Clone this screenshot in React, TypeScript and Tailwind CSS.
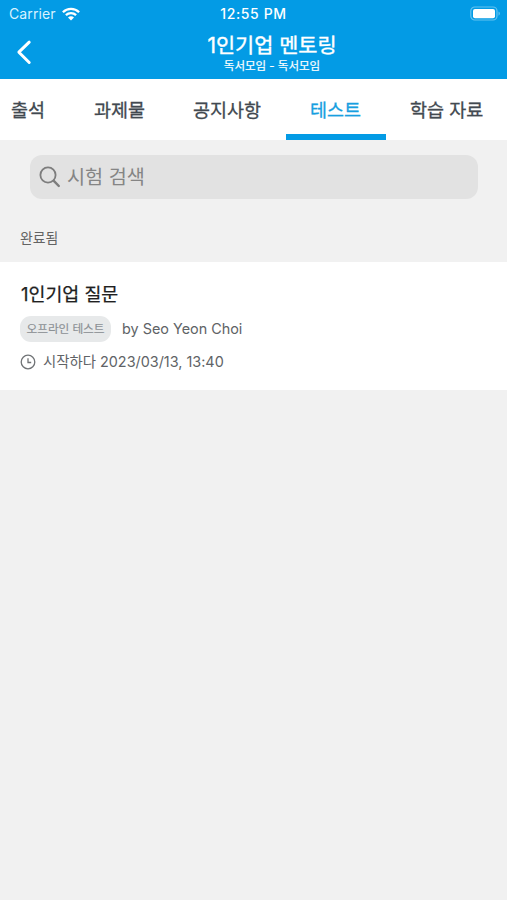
import type { ReactNode } from "react";

const tabs = [
  { label: "출석", box: "w-[70px] pl-[11px]" },
  { label: "과제물", box: "w-[99px] pl-[24px]" },
  { label: "공지사항", box: "w-[117px] pl-[24px]" },
  { label: "테스트", box: "w-[100px] pl-[24px]", active: true },
  { label: "학습 자료", box: "w-[121px] pl-[24px]" },
];

function Pill({ children }: { children: ReactNode }) {
  return (
    <span className="flex h-[26px] w-[91px] shrink-0 items-center justify-center rounded-[11px] bg-[#e7e9ea] pt-[2px] text-[11.7px] tracking-[-0.1px] text-[#8b9094] [-webkit-text-stroke:0.15px_#8b9094]">
      {children}
    </span>
  );
}

function StatusBar() {
  return (
    <div className="grid h-[28px] grid-cols-3 items-center pl-[9px] pr-[6px] text-[14px] leading-none">
      <div className="flex items-center gap-[6px]">
        <span className="tracking-[0.1px] text-[#d8f2ff]">Carrier</span>
        <svg width="18" height="14" viewBox="0 0 18 14" fill="none" stroke="white" strokeWidth="2.3">
          <path d="M0.9 5.2C5.4 0.7 12.6 0.7 17.1 5.2" />
          <path d="M3.9 8.2C6.8 5.4 11.2 5.4 14.1 8.2" />
          <path d="M6 10.4C7.6 8.9 10.4 8.9 12 10.4L9 13.6Z" fill="white" stroke="none" />
        </svg>
      </div>
      <span className="pr-[3px] text-center font-medium tracking-[0.6px]">12:55 PM</span>
      <svg className="justify-self-end" width="31" height="16" viewBox="0 0 31 16">
        <rect x="0.8" y="1" width="26.2" height="13" rx="4" fill="none" stroke="#65c3f0" strokeWidth="1.2" />
        <rect x="3" y="3" width="22" height="9.3" rx="2" fill="white" />
        <path d="M28.5 5.5C30.4 6.2 30.4 9 28.5 9.7Z" fill="#65c3f0" />
      </svg>
    </div>
  );
}

export default function App() {
  return (
    <div className="flex h-[900px] w-[507px] flex-col overflow-hidden bg-[#f1f1f1] font-[Inter,'Noto_Sans_CJK_KR',sans-serif] whitespace-nowrap">
      <header className="h-[79px] bg-[#039be5] text-white">
        <StatusBar />
        <div className="flex h-[51px] pr-[23px]">
          <svg className="mt-[11px] ml-[16px] shrink-0" width="18" height="26" viewBox="0 0 18 26" fill="none" stroke="white" strokeWidth="3" strokeLinecap="round" strokeLinejoin="round">
            <path d="M13.2 3.2L2.9 13.2L13.2 23.5" />
          </svg>
          <div className="flex grow flex-col items-center pt-[5px] pl-[26px]">
            <h1 className="text-[20.8px] leading-[26px] [-webkit-text-stroke:0.4px_white]">1인기업 멘토링</h1>
            <p className="text-[11.5px] leading-[14px] [-webkit-text-stroke:0.2px_white]">독서모임 - 독서모임</p>
          </div>
        </div>
      </header>
      <nav className="flex h-[61px] bg-white text-[18.5px] text-[#424950]">
        {tabs.map((t) => (
          <div
            key={t.label}
            className={`flex shrink-0 items-center border-b-[6px] pt-[8px] ${t.box} ${t.active ? "border-[#039be5] text-[#189fe0] [-webkit-text-stroke:0.3px_#189fe0]" : "border-transparent [-webkit-text-stroke:0.3px_#424950]"}`}
          >
            {t.label}
          </div>
        ))}
      </nav>
      <div className="mr-[29px] ml-[30px] mt-[15px] flex h-[44px] items-center rounded-[12px] bg-[#e2e2e2] pl-[9px] text-[19.7px] text-[#858585]">
        <svg width="22" height="22" viewBox="0 0 22 22" fill="none" stroke="#7d7d7d" strokeLinecap="round">
          <circle cx="9" cy="9" r="7.6" strokeWidth="1.8" />
          <path d="M14.8 14.8L19.8 20" strokeWidth="2.4" />
        </svg>
        <span className="ml-[6px] pt-[2px]">시험 검색</span>
      </div>
      <h2 className="mt-[27px] ml-[20px] h-[36px] text-[13.9px] leading-[24px] text-[#636363]">완료됨</h2>
      <article className="h-[128px] bg-white pt-[19px] pl-[20px] text-[#606366]">
        <h3 className="pl-px text-[18.4px] leading-[26px] text-[#202020] [-webkit-text-stroke:0.25px_#202020]">1인기업 질문</h3>
        <div className="mt-[9px] flex items-center gap-[11px] text-[14.4px]">
          <Pill>오프라인 테스트</Pill>
          <span>by Seo Yeon Choi</span>
        </div>
        <div className="mt-[8px] flex h-[24px] items-center gap-[7px] text-[14.4px]">
          <svg width="16" height="16" viewBox="0 0 16 16" fill="none" stroke="#707376" strokeWidth="1.3">
            <circle cx="8" cy="8" r="6.8" />
            <path d="M8 4.3V8.5H11.2" />
          </svg>
          <span>시작하다 2023/03/13, 13:40</span>
        </div>
      </article>
    </div>
  );
}
